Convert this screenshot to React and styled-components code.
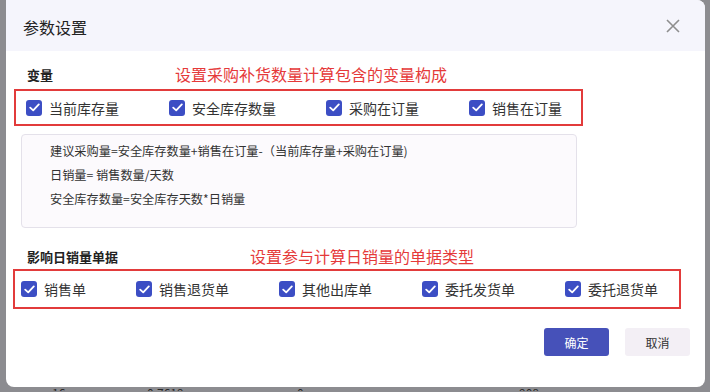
import React from 'react'
import styled, { createGlobalStyle } from 'styled-components'

const GlobalStyle = createGlobalStyle`
  html, body {
    margin: 0;
    padding: 0;
    background: #8c8c90;
    font-family: "Noto Sans CJK SC", "Noto Sans", sans-serif;
    overflow: hidden;
  }
`

const Page = styled.div`
  width: 710px;
  height: 392px;
  padding-left: 6px;
  box-sizing: border-box;
`

const Dialog = styled.div`
  width: 699px;
  height: 387px;
  background: #ffffff;
  border-radius: 0 8px 8px 8px;
  overflow: hidden;
  display: flex;
  flex-direction: column;
`

const Header = styled.div`
  height: 51px;
  background: #f5f5fc;
  display: flex;
  align-items: center;
  justify-content: space-between;
  padding: 0 24px 0 17px;
  flex-shrink: 0;
`

const Title = styled.h2`
  margin: 0;
  font-size: 16px;
  font-weight: 400;
  color: #222;
  padding-top: 2px;
`

const Close = styled.button`
  border: none;
  background: transparent;
  padding: 0;
  width: 16px;
  height: 16px;
  display: flex;
  cursor: pointer;
`

const Body = styled.div`
  padding: 11px 0 0 8px;
  display: flex;
  flex-direction: column;
`

const SectionHead = styled.div`
  display: flex;
  align-items: center;
  height: 24px;
  margin-top: ${p => p.$top || 0}px;
`

const SectionTitle = styled.span`
  font-size: 13px;
  font-weight: 700;
  color: #222;
  margin-left: 13px;
  width: ${p => p.$w}px;
`

const Note = styled.span`
  font-size: 16px;
  color: #e53a3a;
`

const Marked = styled.div`
  border: 2px solid #e23b3b;
  box-sizing: border-box;
  width: ${p => p.$w}px;
  height: ${p => p.$h}px;
  margin-top: ${p => p.$top}px;
  margin-left: ${p => p.$left}px;
  padding-left: ${p => p.$pad}px;
  display: flex;
  align-items: center;
`

const Option = styled.label`
  display: flex;
  align-items: center;
  gap: 7px;
  width: ${p => p.$w}px;
  font-size: 14px;
  color: #333;
  flex-shrink: 0;
`

const Box = styled.span`
  width: 16px;
  height: 16px;
  border-radius: 3px;
  background: #3c4ec4;
  display: flex;
  align-items: center;
  justify-content: center;
`

const Formula = styled.div`
  margin: 8px 0 0 7px;
  width: 556px;
  height: 94px;
  box-sizing: border-box;
  border: 1px solid #e4e1ea;
  border-radius: 4px;
  background: #fcfafd;
  padding: 7px 0 0 28px;
  display: flex;
  flex-direction: column;
  gap: 6px;
`

const Line = styled.div`
  font-size: 12.2px;
  color: #333;
  line-height: 18px;
  white-space: nowrap;
`

const Footer = styled.div`
  display: flex;
  justify-content: flex-end;
  gap: 16px;
  padding: 19px 15px 0 0;
`

const Btn = styled.button`
  width: 65px;
  height: 28px;
  border: none;
  border-radius: 3px;
  font-family: inherit;
  font-size: 12px;
  background: ${p => (p.$primary ? '#4651b9' : '#f3eff5')};
  color: ${p => (p.$primary ? '#fff' : '#333')};
`

const Behind = styled.div`
  display: flex;
  height: 5px;
  overflow: hidden;
  font-size: 12px;
  line-height: 14px;
  color: #2a2a2a;
  margin-top: -1px;
`

const Cell = styled.span`
  width: ${p => p.$w}px;
  flex-shrink: 0;
`

const Check = () => (
  <Box>
    <svg width="11" height="9" viewBox="0 0 11 9">
      <path d="M1.2 4.6 L4.2 7.4 L9.8 1.4" fill="none" stroke="#fff" strokeWidth="1.8" strokeLinecap="round" strokeLinejoin="round" />
    </svg>
  </Box>
)

const vars = [
  { t: '当前库存量', w: 143 },
  { t: '安全库存数量', w: 157 },
  { t: '采购在订量', w: 143 },
  { t: '销售在订量', w: 100 },
]

const docs = [
  { t: '销售单', w: 115 },
  { t: '销售退货单', w: 143 },
  { t: '其他出库单', w: 143 },
  { t: '委托发货单', w: 143 },
  { t: '委托退货单', w: 96 },
]

export default function App() {
  return (
    <>
      <GlobalStyle />
      <Page>
        <Dialog>
          <Header>
            <Title>参数设置</Title>
            <Close aria-label="关闭">
              <svg width="16" height="16" viewBox="0 0 16 16">
                <path d="M2 2 L14 14 M14 2 L2 14" stroke="#8e8e8e" strokeWidth="1.6" />
              </svg>
            </Close>
          </Header>
          <Body>
            <SectionHead>
              <SectionTitle $w={148}>变量</SectionTitle>
              <Note>设置采购补货数量计算包含的变量构成</Note>
            </SectionHead>
            <Marked $w={569} $h={37} $top={3} $left={0} $pad={10}>
              {vars.map(v => (
                <Option key={v.t} $w={v.w}>
                  <Check />
                  {v.t}
                </Option>
              ))}
            </Marked>
            <Formula>
              <Line>建议采购量=安全库存数量+销售在订量-（当前库存量+采购在订量)</Line>
              <Line>日销量= 销售数量/天数</Line>
              <Line>安全库存数量=安全库存天数*日销量</Line>
            </Formula>
            <SectionHead $top={16}>
              <SectionTitle $w={223}>影响日销量单据</SectionTitle>
              <Note>设置参与计算日销量的单据类型</Note>
            </SectionHead>
            <Marked $w={668} $h={40} $top={1} $left={-1} $pad={6}>
              {docs.map(v => (
                <Option key={v.t} $w={v.w}>
                  <Check />
                  {v.t}
                </Option>
              ))}
            </Marked>
          </Body>
          <Footer>
            <Btn $primary>确定</Btn>
            <Btn>取消</Btn>
          </Footer>
        </Dialog>
        <Behind>
          <Cell $w={46} />
          <Cell $w={95}>16</Cell>
          <Cell $w={150}>0.7619</Cell>
          <Cell $w={222}>0</Cell>
          <Cell $w={60}>908</Cell>
        </Behind>
      </Page>
    </>
  )
}
